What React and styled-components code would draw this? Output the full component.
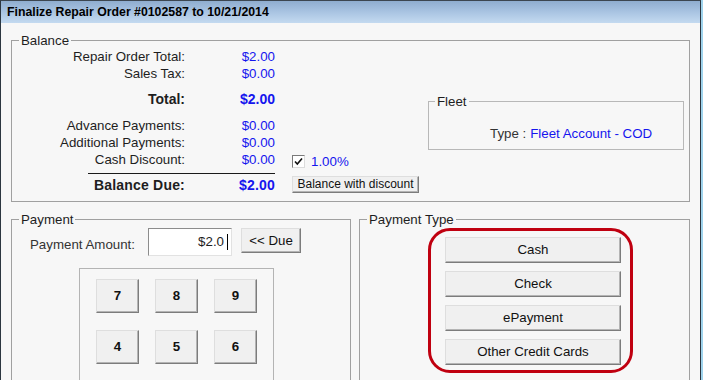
import React from 'react'
import styled, { createGlobalStyle } from 'styled-components'

const GlobalStyle = createGlobalStyle`
    html, body {
        margin: 0;
        padding: 0;
        background: #9fd3ec;
        overflow: hidden;
    }
    body {
        font-family: 'Liberation Sans', Arial, sans-serif;
        font-size: 13.3px;
        color: #1e1e1e;
    }
`;

const summary = [
    { label: 'Repair Order Total:', value: '$2.00' },
    { label: 'Sales Tax:', value: '$0.00' },
    { label: 'Total:', value: '$2.00', bold: true, gap: 9 },
    { label: 'Advance Payments:', value: '$0.00', gap: 9 },
    { label: 'Additional Payments:', value: '$0.00' },
    { label: 'Cash Discount:', value: '$0.00' },
]

const keys = ['7', '8', '9', '4', '5', '6']
const paymentTypes = ['Cash', 'Check', 'ePayment', 'Other Credit Cards']

const App = () => {
    return (
        <>
            <GlobalStyle />
            <Window>
                <TitleBar>Finalize Repair Order #0102587 to 10/21/2014</TitleBar>
                <Body>
                    <Group>
                        <Legend>Balance</Legend>
                        <BalanceLayout>
                            <Summary>
                                {summary.map((row) => (
                                    <SumRow key={row.label} gap={row.gap} bold={row.bold}>
                                        <Label>{row.label}</Label>
                                        <Value>{row.value}</Value>
                                    </SumRow>
                                ))}
                                <Divider />
                                <SumRow gap={3} bold wide>
                                    <Label>Balance Due:</Label>
                                    <Value>$2.00</Value>
                                </SumRow>
                            </Summary>
                            <Side>
                                <CheckRow>
                                    <CheckBox>
                                        <svg width="9" height="9" viewBox="0 0 9 9">
                                            <path d="M1 4.5 L3.3 7 L8 1.5" fill="none" stroke="#111" strokeWidth="1.6" />
                                        </svg>
                                    </CheckBox>
                                    <Percent>1.00%</Percent>
                                </CheckRow>
                                <SmallButton>Balance with discount</SmallButton>
                            </Side>
                            <FleetGroup>
                                <Legend small>Fleet</Legend>
                                <FleetLine>
                                    <TypeLabel>Type :</TypeLabel>
                                    <FleetValue>Fleet Account - COD</FleetValue>
                                </FleetLine>
                            </FleetGroup>
                        </BalanceLayout>
                    </Group>

                    <LowerRow>
                        <Group width={341}>
                            <Legend>Payment</Legend>
                            <AmountRow>
                                <AmountLabel>Payment Amount:</AmountLabel>
                                <TextBox>
                                    $2.0<Caret />
                                </TextBox>
                                <DueButton>&lt;&lt; Due</DueButton>
                            </AmountRow>
                            <Keypad>
                                {keys.map((k) => (
                                    <Key key={k}>{k}</Key>
                                ))}
                            </Keypad>
                        </Group>
                        <Group width={332}>
                            <Legend>Payment Type</Legend>
                            <TypeList>
                                {paymentTypes.map((t) => (
                                    <TypeButton key={t}>{t}</TypeButton>
                                ))}
                            </TypeList>
                        </Group>
                    </LowerRow>
                </Body>
                <Highlight />
            </Window>
        </>
    )
}

export default App


const Window = styled.div`
    position: relative;
    width: 701px;
    height: 380px;
    box-sizing: border-box;
    background: #f7f7f7;
    border-top: 1px solid #3c4650;
    border-left: 1px solid #2c3640;
    border-right: 1px solid #2c3640;
    overflow: hidden;
`;

const TitleBar = styled.div`
    height: 22px;
    line-height: 23px;
    padding-left: 6px;
    font-size: 12.3px;
    font-weight: bold;
    color: #000;
    background: linear-gradient(to bottom, #8fadcf 0%, #a9c4e2 50%, #c4daf0 100%);
`;

const Body = styled.div`
    padding: 10px 10px 0 10px;
`;

const Group = styled.fieldset`
    margin: 0;
    padding: 0;
    border: 1px solid #a0a0a0;
    box-sizing: border-box;
    min-width: 0;
    width: ${({ width }) => (width ? `${width}px` : 'auto')};
    height: ${({ width }) => (width ? '175px' : 'auto')};
    overflow: hidden;
`;

const Legend = styled.legend`
    margin-left: ${({ small }) => (small ? '6px' : '7px')};
    padding: 0 2px;
    font-size: 13.3px;
    line-height: 15px;
    color: #1e1e1e;
`;

const BalanceLayout = styled.div`
    display: flex;
    align-items: flex-start;
    padding-bottom: 7px;
`;

const Summary = styled.div`
    display: flex;
    flex-direction: column;
    width: 263px;
`;

const SumRow = styled.div`
    display: grid;
    grid-template-columns: 173px 90px;
    height: 17px;
    line-height: 17px;
    margin-top: ${({ gap }) => gap || 0}px;
    font-size: ${({ bold }) => (bold ? '14px' : '13.3px')};
    font-weight: ${({ bold }) => (bold ? 'bold' : 'normal')};
    letter-spacing: ${({ wide }) => (wide ? '0.2px' : '0')};
`;

const Label = styled.span`
    text-align: right;
    white-space: nowrap;
    color: #1e1e1e;
`;

const Value = styled.span`
    text-align: right;
    color: #1515ee;
`;

const Divider = styled.div`
    margin: 5px 0 0 76px;
    width: 187px;
    height: 1px;
    background: #1a1a1a;
`;

const Side = styled.div`
    display: flex;
    flex-direction: column;
    width: 127px;
    margin-left: 17px;
    padding-top: 106px;
`;

const CheckRow = styled.div`
    display: flex;
    align-items: center;
    height: 15px;
`;

const CheckBox = styled.span`
    display: flex;
    align-items: center;
    justify-content: center;
    width: 11px;
    height: 11px;
    background: #fff;
    border: 1px solid;
    border-color: #7a7a7a #dcdcdc #dcdcdc #7a7a7a;
`;

const Percent = styled.span`
    margin-left: 6px;
    color: #1515ee;
`;

const Button = styled.div`
    display: flex;
    align-items: center;
    justify-content: center;
    box-sizing: border-box;
    padding-bottom: 1px;
    background: #f0f0f0;
    border: 1px solid;
    border-color: #dedede #7c7c7c #7c7c7c #dedede;
    box-shadow: inset -1px -1px 0 #b4b4b4;
    color: #111;
    white-space: nowrap;
`;

const SmallButton = styled(Button)`
    margin-top: 7px;
    width: 127px;
    height: 17px;
    font-size: 12px;
`;

const FleetGroup = styled.fieldset`
    margin: 46px 0 0 9px;
    padding: 0;
    width: 256px;
    box-sizing: border-box;
    border: 1px solid #b8b8b8;
`;

const FleetLine = styled.div`
    display: flex;
    padding: 16px 0 7px 61px;
    line-height: 17px;
`;

const TypeLabel = styled.span`
    color: #333;
    margin-right: 4px;
`;

const FleetValue = styled.span`
    color: #1515ee;
`;

const LowerRow = styled.div`
    display: flex;
    gap: 8px;
    margin-top: 10px;
`;

const AmountRow = styled.div`
    display: flex;
    align-items: flex-start;
    margin-top: 1px;
    padding-left: 18px;
`;

const AmountLabel = styled.span`
    width: 106px;
    margin-top: 8px;
    line-height: 17px;
    color: #333;
    white-space: nowrap;
`;

const TextBox = styled.div`
    display: flex;
    align-items: flex-start;
    justify-content: flex-end;
    margin-left: 12px;
    width: 84px;
    height: 28px;
    box-sizing: border-box;
    padding: 5px 3px 0 0;
    background: #fff;
    border: 1px solid;
    border-color: #8c8c8c #e2e2e2 #e2e2e2 #8c8c8c;
    line-height: 15px;
`;

const Caret = styled.span`
    width: 1px;
    height: 16px;
    margin-left: 3px;
    background: #000;
`;

const DueButton = styled(Button)`
    margin-left: 9px;
    width: 60px;
    height: 25px;
`;

const Keypad = styled.div`
    display: grid;
    grid-template-columns: repeat(3, 43px);
    grid-auto-rows: 34px;
    column-gap: 16px;
    row-gap: 17px;
    margin: 12px 0 0 67px;
    width: 195px;
    height: 140px;
    box-sizing: border-box;
    padding: 10px 16px;
    border: 1px solid #b4b4b4;
`;

const Key = styled(Button)`
    font-weight: bold;
`;

const TypeList = styled.div`
    display: flex;
    flex-direction: column;
    gap: 8px;
    padding: 10px 0 0 85px;
`;

const TypeButton = styled(Button)`
    width: 176px;
    height: 26px;
`;

const Highlight = styled.div`
    position: absolute;
    left: 427px;
    top: 227px;
    width: 205px;
    height: 145px;
    box-sizing: border-box;
    border: 3px solid #c00010;
    border-radius: 22px;
    pointer-events: none;
`;
